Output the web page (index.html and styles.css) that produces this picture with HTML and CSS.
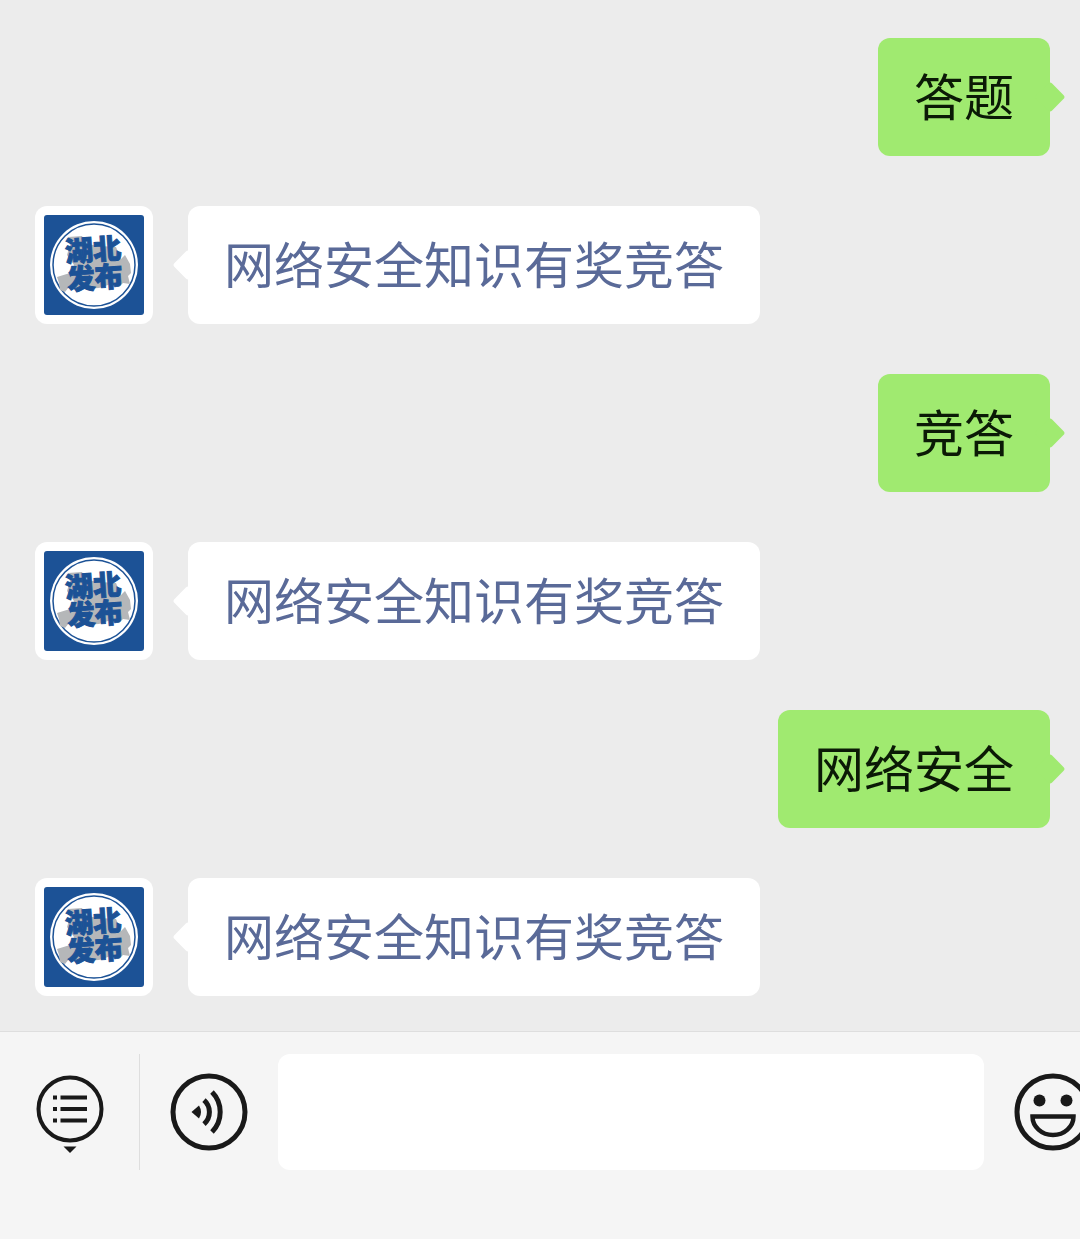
FILE: index.html
```html
<!doctype html>
<html lang="zh-CN">
<head>
    <meta charset="utf-8">
    <meta name="viewport" content="width=device-width">
    <title>湖北发布</title>
    <link rel="stylesheet" href="styles.css">
</head>
<body>
<ul class="chat">
    <li class="message mine">
        <div class="bubble">答题</div>
    </li>
    <li class="message">
        <div class="avatar">
            <svg viewBox="0 0 100 100">
                <rect width="100" height="100" rx="3" fill="#1c5296"/>
                <circle cx="50" cy="50" r="44" fill="#fff"/>
                <circle cx="50" cy="50" r="41" fill="none" stroke="#1c5296" stroke-width="1.5"/>
                <path d="M24 22l14-1 4 8 14 2 16 1 5 12 4-4 5 9 1 9-3 3 2 8-7-1-4 4-8-3-12 4-18 1-12-2-4 5-5-2-1-7-2-6 13-4 4-8-7-10 3-10z" fill="#b5b7b9"/>
                <g class="logo-text" transform="rotate(-4 50 50)">
                    <text x="50" y="45" text-anchor="middle">湖北</text>
                    <text x="50" y="73" text-anchor="middle">发布</text>
                </g>
            </svg>
        </div>
        <div class="bubble"><a href="#">网络安全知识有奖竞答</a></div>
    </li>
    <li class="message mine">
        <div class="bubble">竞答</div>
    </li>
    <li class="message">
        <div class="avatar">
            <svg viewBox="0 0 100 100">
                <rect width="100" height="100" rx="3" fill="#1c5296"/>
                <circle cx="50" cy="50" r="44" fill="#fff"/>
                <circle cx="50" cy="50" r="41" fill="none" stroke="#1c5296" stroke-width="1.5"/>
                <path d="M24 22l14-1 4 8 14 2 16 1 5 12 4-4 5 9 1 9-3 3 2 8-7-1-4 4-8-3-12 4-18 1-12-2-4 5-5-2-1-7-2-6 13-4 4-8-7-10 3-10z" fill="#b5b7b9"/>
                <g class="logo-text" transform="rotate(-4 50 50)">
                    <text x="50" y="45" text-anchor="middle">湖北</text>
                    <text x="50" y="73" text-anchor="middle">发布</text>
                </g>
            </svg>
        </div>
        <div class="bubble"><a href="#">网络安全知识有奖竞答</a></div>
    </li>
    <li class="message mine">
        <div class="bubble">网络安全</div>
    </li>
    <li class="message">
        <div class="avatar">
            <svg viewBox="0 0 100 100">
                <rect width="100" height="100" rx="3" fill="#1c5296"/>
                <circle cx="50" cy="50" r="44" fill="#fff"/>
                <circle cx="50" cy="50" r="41" fill="none" stroke="#1c5296" stroke-width="1.5"/>
                <path d="M24 22l14-1 4 8 14 2 16 1 5 12 4-4 5 9 1 9-3 3 2 8-7-1-4 4-8-3-12 4-18 1-12-2-4 5-5-2-1-7-2-6 13-4 4-8-7-10 3-10z" fill="#b5b7b9"/>
                <g class="logo-text" transform="rotate(-4 50 50)">
                    <text x="50" y="45" text-anchor="middle">湖北</text>
                    <text x="50" y="73" text-anchor="middle">发布</text>
                </g>
            </svg>
        </div>
        <div class="bubble"><a href="#">网络安全知识有奖竞答</a></div>
    </li>
</ul>

<form class="toolbar">
    <button type="button" class="menu" aria-label="菜单">
        <svg width="80" height="80" viewBox="0 0 80 80">
            <circle cx="40" cy="37" r="31.5" fill="none" stroke="#191919" stroke-width="4"/>
            <path d="M23 25.5h4M30.5 25.5H57M23 37h4M30.5 37H57M23 48.5h4M30.5 48.5H57" stroke="#191919" stroke-width="4"/>
            <path d="M33.5 74.500h13L40 81z" fill="#191919"/>
        </svg>
    </button>
    <button type="button" aria-label="语音">
        <svg width="80" height="80" viewBox="0 0 80 80">
            <circle cx="40" cy="40" r="36" fill="none" stroke="#191919" stroke-width="5"/>
            <path d="M22.500 40l7.500-6.500q4 6.500 0 13z" fill="#191919"/>
            <path d="M35 28a16 16 0 0 1 0 24M43 20a28.500 28.500 0 0 1 0 40" fill="none" stroke="#191919" stroke-width="5"/>
        </svg>
    </button>
    <input type="text" aria-label="消息">
    <button type="button" class="emoji" aria-label="表情">
        <svg width="80" height="80" viewBox="0 0 80 80">
            <circle cx="40" cy="40" r="36" fill="none" stroke="#191919" stroke-width="5"/>
            <circle cx="26.5" cy="28.5" r="6" fill="#191919"/>
            <circle cx="53.5" cy="28.5" r="6" fill="#191919"/>
            <path d="M19.5 44.500h41a20.500 18.500 0 0 1-41 0z" fill="none" stroke="#191919" stroke-width="4.5"/>
        </svg>
    </button>
</form>
</body>
</html>
```
FILE: styles.css
```css
* {
    box-sizing: border-box;
}

body {
    display: flex;
    flex-direction: column;
    min-height: 100vh;
    margin: 0;
    color: #0b1a06;
    background-color: #ececec;
    font-family: "Noto Sans CJK SC", sans-serif;
    font-size: 50px;
    line-height: 70px;
}

.chat {
    flex: 1;
    display: flex;
    flex-direction: column;
    gap: 50px;
    margin: 0;
    padding: 38px 30px 35px 35px;
    list-style: none;
}

.message {
    display: flex;
    align-items: flex-start;
    gap: 35px;
}

.mine {
    justify-content: flex-end;
}

.avatar {
    flex: none;
    padding: 9px;
    border-radius: 12px;
    background-color: #fff;
}

.avatar svg {
    display: block;
    width: 100px;
    height: 100px;
}

.logo-text {
    fill: #1c5296;
    stroke: #1c5296;
    stroke-width: 1px;
    font-size: 28px;
    font-weight: 900;
}

.bubble {
    position: relative;
    padding: 21px 36px 27px;
    border-radius: 12px;
    background-color: #fff;
}

.mine .bubble {
    background-color: #a0ea70;
}

/* bubble tail */
.bubble::before {
    content: "";
    position: absolute;
    top: 50%;
    left: -11px;
    width: 22px;
    height: 22px;
    margin-top: -11px;
    border-radius: 3px;
    background-color: inherit;
    transform: rotate(45deg);
}

.mine .bubble::before {
    left: auto;
    right: -11px;
}

.bubble a {
    color: #5a6a98;
    text-decoration: none;
}

.toolbar {
    display: flex;
    padding: 22px 0 69px;
    border-top: 1px solid #dedede;
    background-color: #f5f5f5;
    overflow: hidden;
}

.toolbar button {
    flex: none;
    display: flex;
    align-items: center;
    justify-content: center;
    width: 138px;
    height: 116px;
    padding: 0;
    border: 0;
    background: none;
}

.toolbar svg {
    overflow: visible;
}

.toolbar .menu {
    width: 140px;
    border-right: 1px solid #dedede;
}

/* runs off the right edge */
.toolbar .emoji {
    margin-right: -42px;
}

.toolbar input {
    flex: 1;
    min-width: 0;
    padding: 0 24px;
    border: 0;
    border-radius: 12px;
    background-color: #fff;
    font: inherit;
}
```
